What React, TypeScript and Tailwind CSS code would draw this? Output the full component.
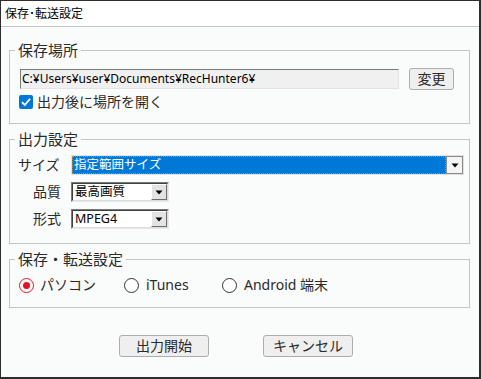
import React from "react";

const FONT = "font-['Noto_Sans','Noto_Sans_CJK_JP',sans-serif]";

function Arrow() {
  return (
    <svg width="8" height="5" viewBox="0 0 8 5">
      <path d="M0.5 0.5 H7.5 L4 4.5 Z" fill="#000" />
    </svg>
  );
}

function ClassicSelect({ value, width }: { value: string; width: string }) {
  return (
    <div
      className={`flex h-[20px] ${width} border border-t-[#7a7a7a] border-l-[#7a7a7a] border-r-[#e8e8e8] border-b-[#e8e8e8] bg-white`}
    >
      <div className="flex flex-1 items-center border border-t-[#404040] border-l-[#404040] border-r-[#dcdcdc] border-b-[#dcdcdc] bg-white pl-[2px]">
        <span className="flex-1 text-[12.5px] leading-none text-black">{value}</span>
        <div className="flex h-full w-[16px] items-center justify-center border border-t-white border-l-white border-r-[#6d6d6d] border-b-[#6d6d6d] bg-[#e3e3e3]">
          <Arrow />
        </div>
      </div>
    </div>
  );
}

export default function App() {
  return (
    <div className={`${FONT} w-[481px] h-[379px] bg-[#2a2222]`}>
      <div className="flex h-full flex-col border-t border-l border-r-2 border-b-2 border-[#2e2e2e] bg-[#fafbfb]">
        {/* title bar */}
        <div className="flex h-[25px] items-center bg-white pl-[4px] text-[12px] text-black">
          保存･転送設定
        </div>
        <div className="h-px bg-[#c4c4c4]" />

        <div className="flex flex-col pl-[8px]">
          {/* Group 1 */}
          <fieldset className="mt-[14px] w-[461px] border border-[#c4c4c4]">
            <legend className="ml-[5px] px-[3px] text-[15px] leading-[19px] text-[#2a2a2a]">保存場所</legend>
            <div className="flex h-[63px] flex-col pl-[9px] pt-[8px]">
              <div className="flex items-center">
                <div className="ml-px flex h-[20px] w-[379px] items-center border border-t-[#7a7a7a] border-l-[#7a7a7a] border-r-[#e3e3e3] border-b-[#e3e3e3] bg-[#f0f0f0] pl-[1px] text-[12px] leading-none text-black">
                  C:¥Users¥user¥Documents¥RecHunter6¥
                </div>
                <button className="ml-[10px] h-[22px] w-[45px] rounded-[3px] border border-[#adadad] bg-[#efefef] text-[14px] leading-none text-[#2a2a2a]">
                  変更
                </button>
              </div>
              <div className="mt-[3px] flex h-[18px] items-center">
                <div className="flex h-[14px] w-[14px] items-center justify-center rounded-[2px] bg-[#0078d7]">
                  <svg width="12" height="12" viewBox="0 0 12 12">
                    <path d="M2 6.2 L4.8 9 L10 2.8" fill="none" stroke="#fff" strokeWidth="1.8" />
                  </svg>
                </div>
                <span className="ml-[4px] text-[14px] leading-none text-[#2a2a2a]">出力後に場所を開く</span>
              </div>
            </div>
          </fieldset>

          {/* Group 2 */}
          <fieldset className="mt-[6px] w-[461px] border border-[#c4c4c4]">
            <legend className="ml-[5px] px-[3px] text-[15px] leading-[19px] text-[#2a2a2a]">出力設定</legend>
            <div className="flex h-[94px] flex-col gap-[7px] pt-[6px]">
              <div className="flex items-center">
                <span className="w-[51px] pl-[8px] text-left text-[14px] leading-none text-[#2a2a2a]">サイズ</span>
                <div className="ml-[10px] flex h-[20px] w-[393px] border border-[#e0e0e0] bg-white">
                  <div className="flex flex-1 items-center border border-dotted border-[#e08020] bg-[#0078d7] pl-[1px]">
                    <span className="text-[12.5px] leading-none text-white">指定範囲サイズ</span>
                  </div>
                  <div className="flex w-[17px] items-center justify-center border border-[#8a8a8a] bg-[#f4f4f4]">
                    <Arrow />
                  </div>
                </div>
              </div>
              <div className="flex items-center">
                <span className="w-[51px] text-right text-[14px] leading-none text-[#2a2a2a]">品質</span>
                <div className="ml-[10px]">
                  <ClassicSelect value="最高画質" width="w-[98px]" />
                </div>
              </div>
              <div className="flex items-center">
                <span className="w-[51px] text-right text-[14px] leading-none text-[#2a2a2a]">形式</span>
                <div className="ml-[10px]">
                  <ClassicSelect value="MPEG4" width="w-[98px]" />
                </div>
              </div>
            </div>
          </fieldset>

          {/* Group 3 */}
          <fieldset className="mt-[6px] w-[461px] border border-[#c4c4c4]">
            <legend className="ml-[5px] px-[3px] text-[15px] leading-[19px] text-[#2a2a2a]">保存・転送設定</legend>
            <div className="flex h-[38px] items-start pt-[7px] pl-[9px]">
              <div className="flex h-[18px] w-[105px] items-center">
                <div className="flex h-[15px] w-[15px] items-center justify-center rounded-full border-[1.5px] border-[#e81123] bg-white">
                  <div className="h-[7px] w-[7px] rounded-full bg-[#e81123]" />
                </div>
                <span className="ml-[6px] text-[14px] leading-none text-[#2a2a2a]">パソコン</span>
              </div>
              <div className="flex h-[18px] w-[98px] items-center">
                <div className="h-[15px] w-[15px] rounded-full border border-[#333] bg-white" />
                <span className="ml-[7px] text-[14px] leading-none text-[#2a2a2a]">iTunes</span>
              </div>
              <div className="flex h-[18px] items-center">
                <div className="h-[15px] w-[15px] rounded-full border border-[#333] bg-white" />
                <span className="ml-[7px] text-[14px] leading-none text-[#2a2a2a]">Android 端末</span>
              </div>
            </div>
          </fieldset>
        </div>

        {/* buttons */}
        <div className="mt-[27px] flex gap-[54px] pl-[118px]">
          <button className="h-[22px] w-[90px] rounded-[3px] border border-[#adadad] bg-[#efefef] text-[14px] leading-none text-[#2a2a2a]">
            出力開始
          </button>
          <button className="h-[22px] w-[90px] rounded-[3px] border border-[#adadad] bg-[#efefef] text-[14px] leading-none text-[#2a2a2a]">
            キャンセル
          </button>
        </div>
      </div>
    </div>
  );
}
